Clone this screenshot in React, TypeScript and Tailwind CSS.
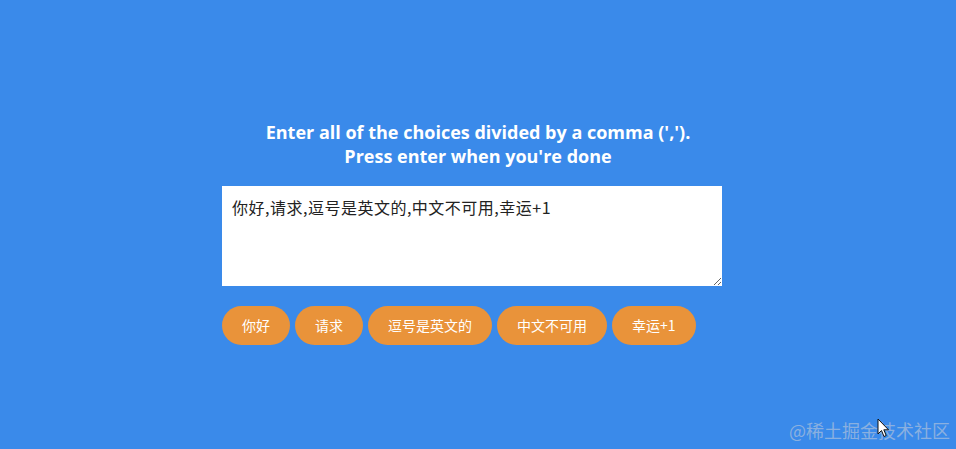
import React from "react";

const choices = ["你好", "请求", "逗号是英文的", "中文不可用", "幸运+1"];

const App = () => {
  return (
    <div className="relative w-[956px] h-[449px] overflow-hidden bg-[#3a8aea] font-['Noto_Sans','Noto_Sans_CJK_SC',sans-serif]">
      <div className="flex flex-col items-center pt-[120px]">
        <h3 className="text-center text-[18px] leading-[24px] font-bold text-white font-['Open_Sans','Noto_Sans_CJK_SC',sans-serif]">
          Enter all of the choices divided by a comma (',').
          <br />
          Press enter when you're done
        </h3>
        <div className="w-[500px] mt-[18px] ml-[-12px]">
          <textarea
            readOnly
            defaultValue="你好,请求,逗号是英文的,中文不可用,幸运+1"
            className="block w-[500px] h-[100px] bg-white px-[10px] py-[10px] text-[16px] leading-[22px] text-[#222] outline-none font-['Noto_Sans_CJK_SC',sans-serif] tracking-[0.5px]"
          />
          <div className="flex gap-[5px] mt-[20px]">
            {choices.map((c, i) => (
              <span
                key={i}
                className="h-[39px] px-[20px] flex items-center rounded-full bg-[#e9933a] text-white text-[14px] font-['Noto_Sans_CJK_SC',sans-serif]"
              >
                {c}
              </span>
            ))}
          </div>
        </div>
      </div>

      {/* watermark */}
      <div className="absolute right-[6px] bottom-[5px] text-[18px] text-[#8ab0e0] font-['Noto_Sans_CJK_SC',sans-serif]">
        @稀土掘金技术社区
      </div>

      {/* cursor */}
      <svg className="absolute left-[877px] top-[418px]" width="13" height="20" viewBox="0 0 13 20">
        <path d="M1 1 L1 16 L4.5 12.5 L7 18.5 L9.2 17.5 L6.8 11.8 L11.5 11.8 Z" fill="#fff" stroke="#111" strokeWidth="1" strokeLinejoin="round" />
      </svg>
    </div>
  );
};

export default App;
